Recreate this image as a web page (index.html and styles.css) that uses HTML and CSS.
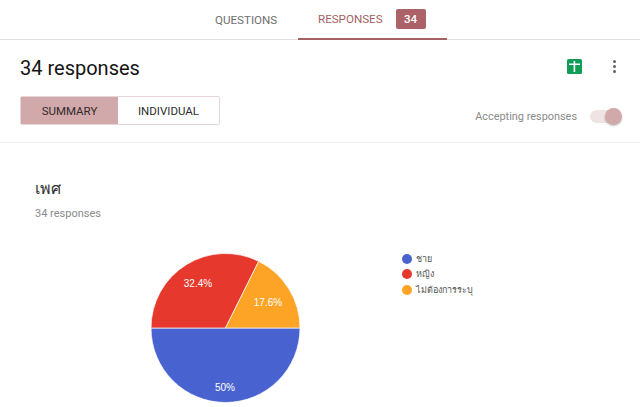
FILE: index.html
```html
<!DOCTYPE html>
<html>
	<head>
		<meta charset="UTF-8">
		<title>Responses</title>
		<link rel="stylesheet" href="styles.css">
	</head>
	<body>
		<!--tabs-->
		<div class="tabs">
			<div class="tab">QUESTIONS</div>
			<div class="tab active">RESPONSES<span class="badge">34</span></div>
		</div>
		<!--summary head-->
		<div class="head">
			<div class="headTop">
				<div class="title">34 responses</div>
				<div class="tools">
					<svg class="sheet" width="15" height="15" viewBox="0 0 15 15">
						<rect width="15" height="15" rx="1.5" fill="#0f9d58"/>
						<path d="M2 4.6h4.6V2h1.6v2.6H13v1.5H8.2V13H6.6V6.1H2z" fill="#fff"/>
					</svg>
					<div class="more"><span></span><span></span><span></span></div>
				</div>
			</div>
			<div class="headBottom">
				<div class="switchBtns">
					<div class="btn on">SUMMARY</div>
					<div class="btn">INDIVIDUAL</div>
				</div>
				<div class="accept">
					<span>Accepting responses</span>
					<div class="toggle"><div class="knob"></div></div>
				</div>
			</div>
		</div>
		<!--question-->
		<div class="card">
			<div class="qTitle">เพศ</div>
			<div class="qCount">34 responses</div>
			<div class="chart">
				<svg class="pie" width="150" height="150" viewBox="0 0 150 150">
					<path d="M75.5 75H1A74.5 74.5 0 0 0 150 75Z" fill="#4863d0" stroke="#fff" stroke-width="0.7"/>
					<path d="M75.5 75H1A74.5 74.5 0 0 1 108.7 8.3Z" fill="#e6382d" stroke="#fff" stroke-width="0.7"/>
					<path d="M75.5 75L108.7 8.3A74.5 74.5 0 0 1 150 75Z" fill="#fda427" stroke="#fff" stroke-width="0.7"/>
					<text x="48" y="34" class="pct">32.4%</text>
					<text x="118" y="52.5" class="pct">17.6%</text>
					<text x="75" y="137.5" class="pct">50%</text>
				</svg>
				<div class="legend">
					<div class="item"><i class="dot blue"></i>ชาย</div>
					<div class="item"><i class="dot red"></i>หญิง</div>
					<div class="item"><i class="dot orange"></i>ไม่ต้องการระบุ</div>
				</div>
			</div>
		</div>
	</body>
</html>
```

FILE: styles.css
```css
*{
	margin: 0;
	padding: 0;
	box-sizing: border-box;
}
body{
	width: 640px;
	height: 407px;
	overflow: hidden;
	background: #fff;
	font-family: Roboto, "Noto Sans", "Noto Sans CJK SC", sans-serif;
}
.tabs{
	height: 40px;
	display: flex;
	padding-left: 194px;
	border-bottom: 1px solid #e0e0e0;
}
.tab{
	width: 104px;
	height: 40px;
	padding-left: 21px;
	display: flex;
	align-items: center;
	font-size: 11.6px;
	color: #6e6e6e;
}
.tab.active{
	width: 149px;
	padding-left: 20px;
	color: #a35f62;
	border-bottom: 2px solid #a56164;
}
.badge{
	width: 30px;
	height: 20px;
	margin-left: 13px;
	border-radius: 2px;
	background: #ab6367;
	color: #fff;
	font-weight: 500;
	line-height: 20px;
	text-align: center;
}
.head{
	height: 103px;
	padding: 0 20px;
	border-bottom: 1px solid #eee;
}
.headTop{
	height: 56px;
	display: flex;
	justify-content: space-between;
	align-items: center;
}
.title{
	font-size: 20px;
	color: #141414;
}
.tools{
	display: flex;
	align-items: center;
	margin-top: -4px;
}
.sheet{
	margin-right: 31px;
}
.more{
	display: flex;
	flex-direction: column;
	gap: 2px;
	margin-right: 4px;
}
.more span{
	width: 3px;
	height: 3px;
	border-radius: 50%;
	background: #616161;
}
.headBottom{
	display: flex;
	justify-content: space-between;
}
.switchBtns{
	width: 200px;
	height: 29px;
	display: flex;
	border: 1px solid #e9d5d6;
	border-radius: 2px;
}
.btn{
	flex: 1;
	display: flex;
	align-items: center;
	justify-content: center;
	font-size: 11.5px;
	color: #2e2e2e;
}
.btn.on{
	flex: none;
	width: 97px;
	background: #d1a9aa;
	color: #33292a;
}
.accept{
	display: flex;
	align-items: center;
	height: 41px;
	font-size: 10.9px;
	color: #8a8a8a;
}
.toggle{
	position: relative;
	width: 30px;
	height: 13px;
	margin-left: 13px;
	border-radius: 7px;
	background: #f0e3e3;
}
.knob{
	position: absolute;
	right: -2px;
	top: -2px;
	width: 17px;
	height: 17px;
	border-radius: 50%;
	background: #d1a9aa;
	box-shadow: 0 1px 2px rgba(0,0,0,0.25);
}
.card{
	padding: 35px 35px 0;
}
.qTitle{
	height: 20px;
	font-family: "Noto Sans", Roboto, sans-serif;
	font-size: 16px;
	line-height: 20px;
	color: #333;
}
.qCount{
	margin-top: 9px;
	font-size: 11px;
	line-height: 14px;
	color: #8a8a8a;
}
.chart{
	display: flex;
	align-items: flex-start;
	margin-top: 30px;
	padding-left: 115px;
}
.pie{
	flex: none;
	margin-top: 2px;
	overflow: visible;
}
.pct{
	font-family: "Liberation Sans", Arial, sans-serif;
	font-size: 10px;
	fill: #fff;
	text-anchor: middle;
}
.legend{
	margin-left: 102px;
}
.item{
	display: flex;
	align-items: center;
	height: 15.5px;
	font-family: "Noto Sans", Roboto, sans-serif;
	font-size: 9px;
	color: #555;
}
.dot{
	width: 10px;
	height: 10px;
	margin-right: 4px;
	border-radius: 50%;
}
.blue{
	background: #4863d0;
}
.red{
	background: #e6382d;
}
.orange{
	background: #fda427;
}
```
